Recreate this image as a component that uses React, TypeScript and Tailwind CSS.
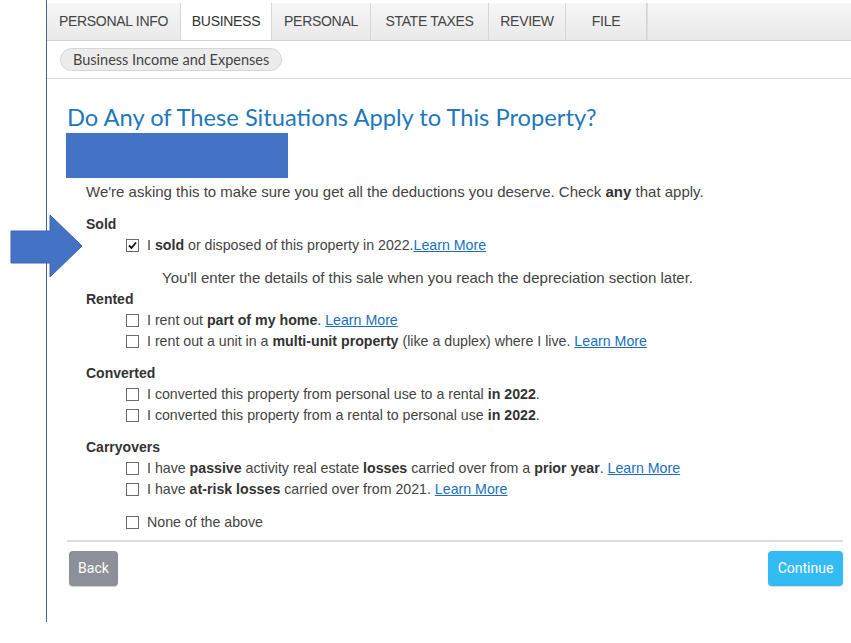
import React from 'react';

const tabs = ['PERSONAL INFO', 'BUSINESS', 'PERSONAL', 'STATE TAXES', 'REVIEW', 'FILE'];
const tabWidths = ['w-[134px]', 'w-[91px]', 'w-[99px]', 'w-[118px]', 'w-[77px]', 'w-[81px]'];

function Box({ checked = false }: { checked?: boolean }) {
  return (
    <span className="inline-flex items-center justify-center w-[13px] h-[13px] border border-[#6b6b6b] bg-white mr-[8px] shrink-0">
      {checked && (
        <svg width="11" height="11" viewBox="0 0 11 11">
          <path d="M2 5.5 L4.5 8 L9 2.5" fill="none" stroke="#111" strokeWidth="1.8" />
        </svg>
      )}
    </span>
  );
}

function Link({ children }: { children: React.ReactNode }) {
  return <span className="text-[#1a6fc4] underline">{children}</span>;
}

function Row({ checked, children }: { checked?: boolean; children: React.ReactNode }) {
  return (
    <div className="h-[21px] flex items-center pl-[59px] text-[14.2px]">
      <Box checked={checked} />
      <span>{children}</span>
    </div>
  );
}

function Label({ text, className = '' }: { text: string; className?: string }) {
  return <div className={`h-[21px] flex items-center pl-[19px] font-bold text-[#333] ${className}`}>{text}</div>;
}

export default function App() {
  return (
    <div className="relative w-[851px] h-[643px] bg-white overflow-hidden font-['Liberation_Sans',Arial,sans-serif] text-[14px] text-[#444]">
      <div className="ml-[46px] border-l-[1.5px] border-[#4b6680] h-[622px]">
        {/* tab bar */}
        <div className="pt-[3px]">
          <div className="flex h-[38px] border-b border-[#d4d4d4] bg-gradient-to-b from-[#f6f6f6] to-[#e9e9e9]">
            {tabs.map((t, i) => (
              <div
                key={t}
                className={`${tabWidths[i]} h-full flex items-center justify-center border-r border-[#d6d6d6] text-[14px] tracking-[-0.3px] ${
                  i === 1 ? 'bg-white text-[#333] -mb-px h-[39px]' : 'text-[#444]'
                }`}
              >
                {t}
              </div>
            ))}
            <div className="flex-1 border-l border-[#dcdcdc]" />
          </div>
        </div>

        {/* sub nav */}
        <div className="h-[38px] border-b border-[#d9d9d9] flex items-start pt-[7px] pl-[13px]">
          <div className="h-[23px] px-[12px] flex items-center rounded-full bg-[#ececec] border border-[#d6d6d6] text-[14.5px] text-[#444] font-['Lato',sans-serif]">
            Business Income and Expenses
          </div>
        </div>

        {/* content */}
        <div className="pl-[20px] pr-[8px]">
          <h1 className="mt-[24px] h-[30px] flex items-center font-['Lato',sans-serif] text-[23.7px] text-[#1f78bd]">
            Do Any of These Situations Apply to This Property?
          </h1>
          <div className="w-[222px] h-[45px] bg-[#4472c4] -ml-px" />

          <div className="mt-[4px] h-[21px] flex items-center pl-[19px] text-[15px]">
            <span>
              We're asking this to make sure you get all the deductions you deserve. Check <b className="text-[#333]">any</b> that apply.
            </span>
          </div>

          <Label text="Sold" className="mt-[11px]" />
          <Row checked>
            I <b className="text-[#333]">sold</b> or disposed of this property in 2022.<Link>Learn More</Link>
          </Row>
          <div className="mt-[12px] h-[21px] flex items-center pl-[95px] text-[15px]">
            You'll enter the details of this sale when you reach the depreciation section later.
          </div>

          <Label text="Rented" />
          <Row>
            I rent out <b className="text-[#333]">part of my home</b>. <Link>Learn More</Link>
          </Row>
          <Row>
            I rent out a unit in a <b className="text-[#333]">multi-unit property</b> (like a duplex) where I live. <Link>Learn More</Link>
          </Row>

          <Label text="Converted" className="mt-[11px]" />
          <Row>
            I converted this property from personal use to a rental <b className="text-[#333]">in 2022</b>.
          </Row>
          <Row>
            I converted this property from a rental to personal use <b className="text-[#333]">in 2022</b>.
          </Row>

          <Label text="Carryovers" className="mt-[11px]" />
          <Row>
            I have <b className="text-[#333]">passive</b> activity real estate <b className="text-[#333]">losses</b> carried over from a{' '}
            <b className="text-[#333]">prior year</b>. <Link>Learn More</Link>
          </Row>
          <Row>
            I have <b className="text-[#333]">at-risk losses</b> carried over from 2021. <Link>Learn More</Link>
          </Row>

          <div className="mt-[12px]">
            <Row>None of the above</Row>
          </div>

          <div className="mt-[7px] h-[2px] bg-[#dcdcdc]" />

          <div className="mt-[9px] flex justify-between items-start">
            <button className="ml-[2px] w-[49px] h-[35px] rounded-[4px] bg-[#8d9098] text-white text-[14px] font-['Roboto',sans-serif] shadow-[0_1px_1px_rgba(0,0,0,0.2)]">
              Back
            </button>
            <button className="w-[75px] h-[35px] rounded-[4px] bg-[#33bcf4] text-white text-[14px] font-['Roboto',sans-serif] shadow-[0_1px_1px_rgba(0,0,0,0.15)]">
              Continue
            </button>
          </div>
        </div>
      </div>

      {/* callout arrow */}
      <svg className="absolute left-[10px] top-[214px]" width="74" height="64" viewBox="0 0 74 64">
        <path d="M1 17 L40 17 L40 1 L72 32 L40 63 L40 49 L1 49 Z" fill="#4472c4" stroke="#3a64b0" strokeWidth="1" />
      </svg>
    </div>
  );
}
